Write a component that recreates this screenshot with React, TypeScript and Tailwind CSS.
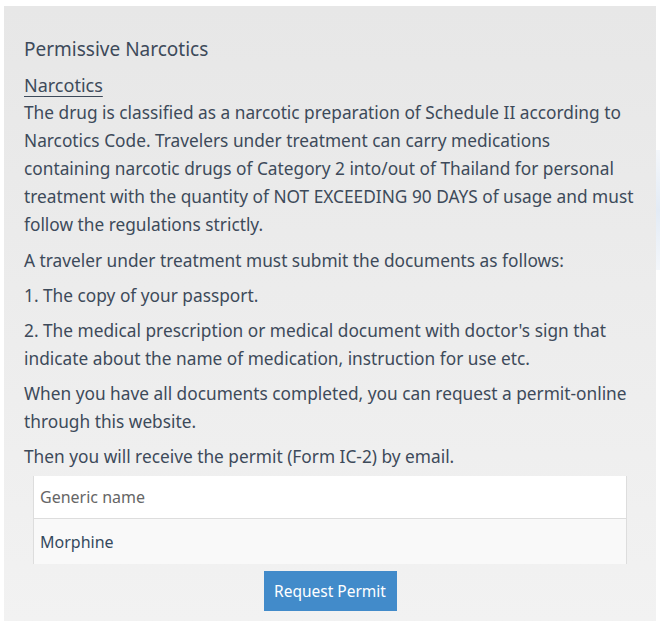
import React from "react";

export default function App() {
  return (
    <div
      className="w-[660px] h-[621px] bg-white overflow-hidden pl-[4px] pt-[6px] relative"
      style={{ fontFamily: "'Noto Sans', sans-serif" }}
    >
      <div className="absolute right-0 top-[150px] w-[4px] h-[120px] bg-gradient-to-b from-[#f4f7fb] via-[#e3ebf5] to-[#f4f7fb]" />
      <div className="w-[652px] h-[615px] bg-gradient-to-b from-[#e7e7e7] to-[#f2f2f2] px-5 pt-[30px] text-[#3d4a5a] text-[17.3px] leading-[28px]">
        <h2 className="text-[19px] leading-[26px]">Permissive Narcotics</h2>
        <div className="mt-[9px] text-[18px] underline underline-offset-[4px] decoration-1">Narcotics</div>
        <p>
          The drug is classified as a narcotic preparation of Schedule II according to Narcotics Code. Travelers under treatment can carry medications containing narcotic drugs of Category 2 into/out of Thailand for personal treatment with the quantity of NOT EXCEEDING 90 DAYS of usage and must follow the regulations strictly.
        </p>
        <p className="mt-[8px]">A traveler under treatment must submit the documents as follows:</p>
        <p className="mt-[7px]">1. The copy of your passport.</p>
        <p className="mt-[7px]">
          2. The medical prescription or medical document with doctor's sign that indicate about the name of medication, instruction for use etc.
        </p>
        <p className="mt-[7px]">
          When you have all documents completed, you can request a permit-online through this website.
        </p>
        <p className="mt-[7px]">Then you will receive the permit (Form IC-2) by email.</p>
        <div className="mx-[9px] mt-[5px] border-x border-[#dddddd]">
          <div className="h-[43px] bg-white border-b border-[#dddddd] flex items-center px-[6px] text-[16px] text-[#666666]">
            Generic name
          </div>
          <div className="h-[45px] bg-[#f9f9f9] flex items-center px-[6px] text-[16px] text-[#34495e]">
            Morphine
          </div>
        </div>
        <div className="flex justify-center mt-[7px]">
          <button className="w-[133px] h-[40px] bg-[#428bca] text-white text-[15.5px]">Request Permit</button>
        </div>
      </div>
    </div>
  );
}
